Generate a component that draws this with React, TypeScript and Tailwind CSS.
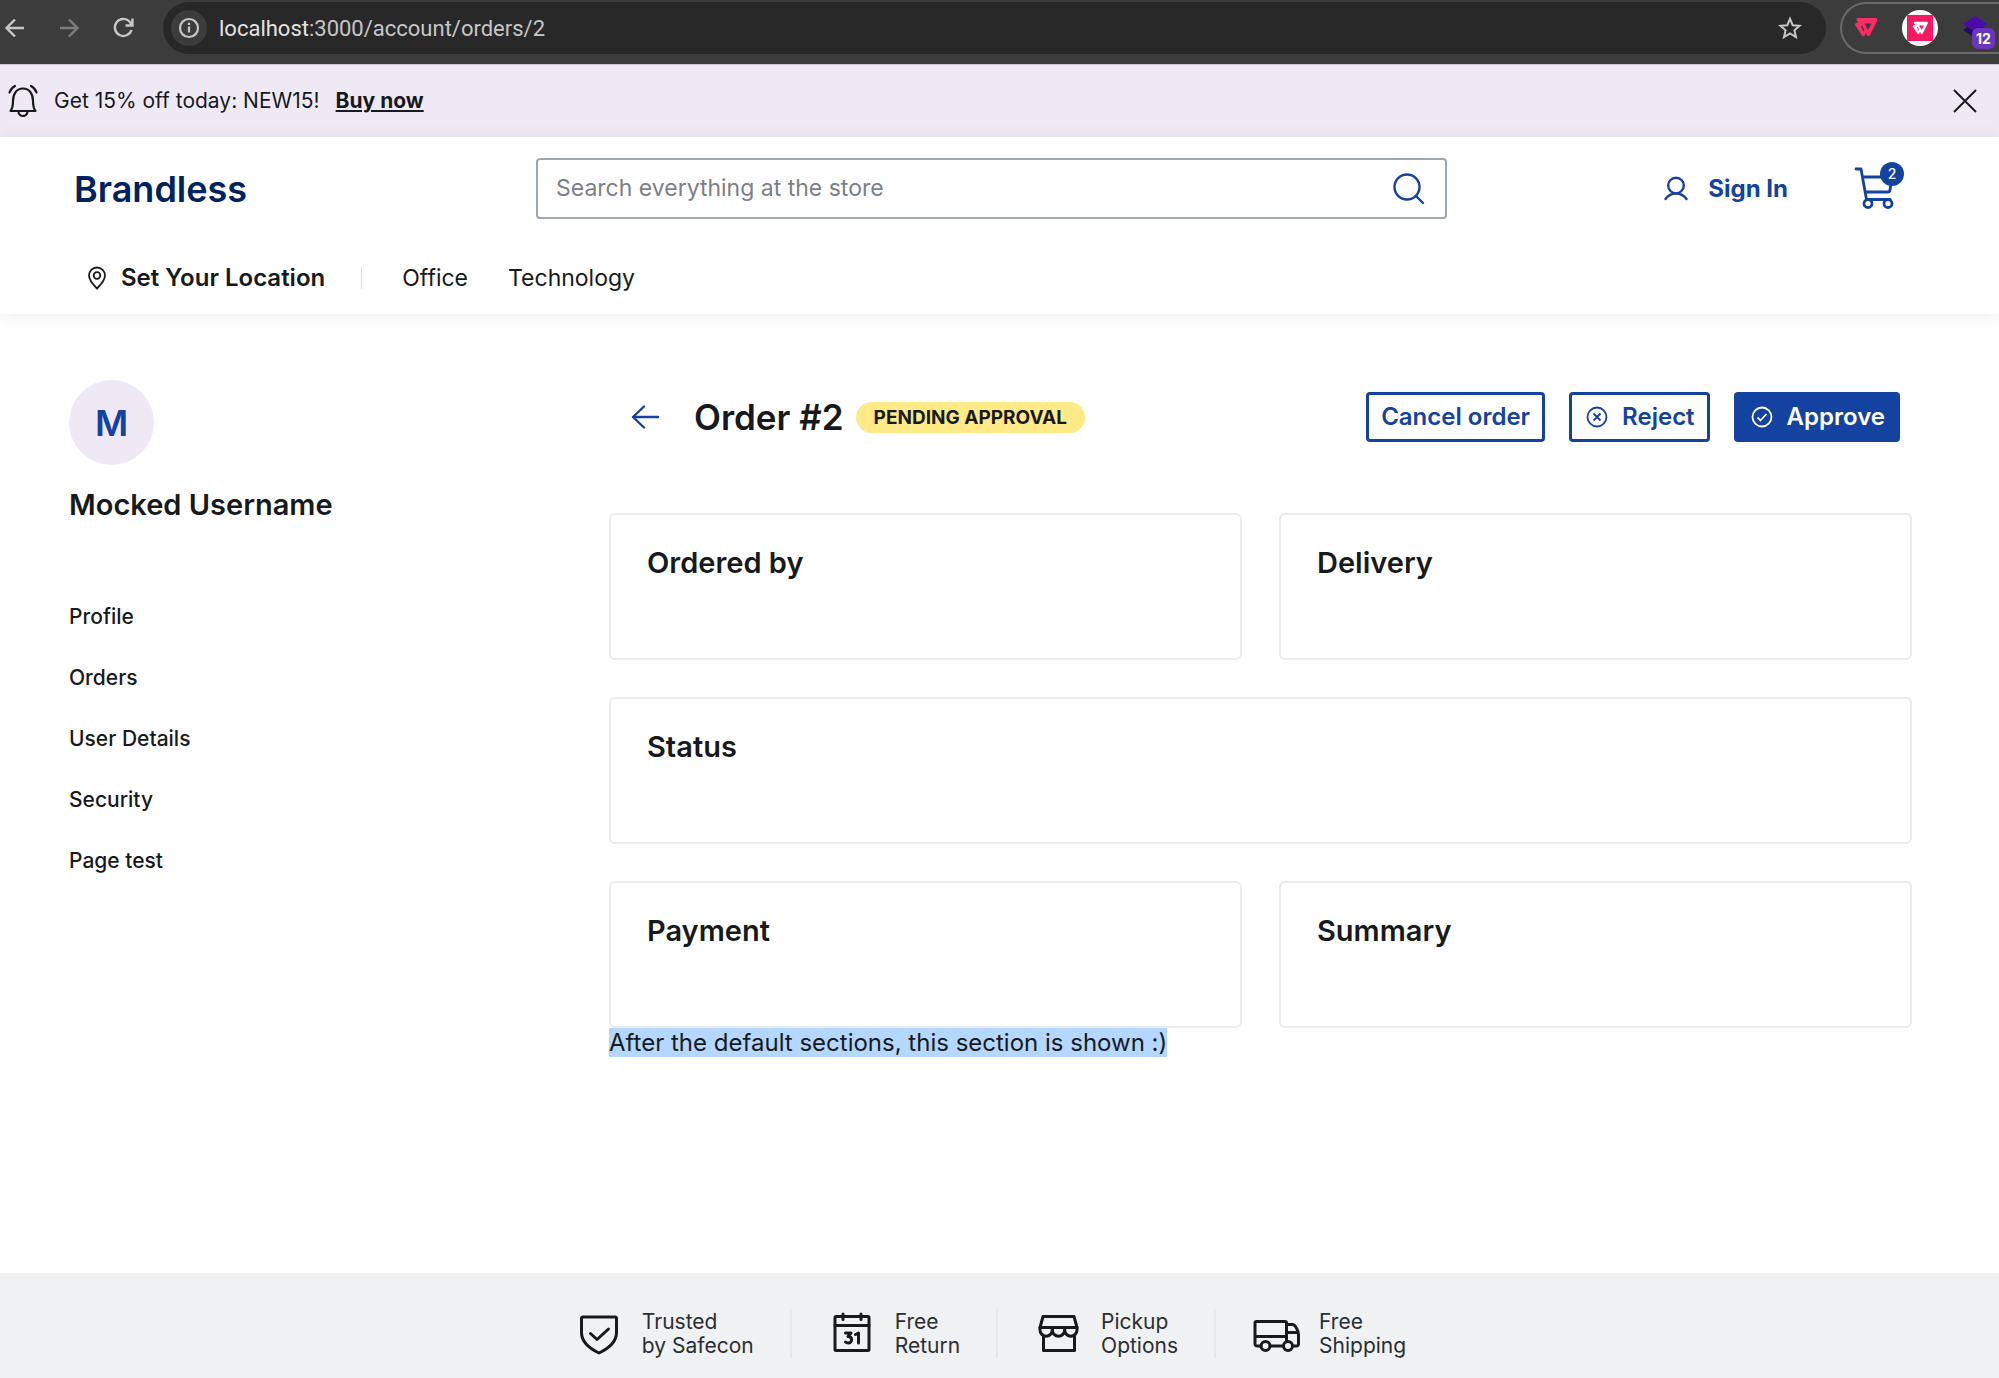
import type { ReactNode } from "react";

const menuItems = ["Profile", "Orders", "User Details", "Security", "Page test"];

const benefits = [
  { icon: <ShieldIcon />, lines: ["Trusted", "by Safecon"] },
  { icon: <CalendarIcon />, lines: ["Free", "Return"] },
  { icon: <StoreIcon />, lines: ["Pickup", "Options"] },
  { icon: <TruckIcon />, lines: ["Free", "Shipping"] },
];

function ShieldIcon() {
  return (
    <svg width="49" height="49" viewBox="0 0 49 49" fill="none" stroke="currentColor" strokeWidth="3" strokeLinejoin="round" strokeLinecap="round">
      <path d="M8 8h32c1 0 1.500.5 1.500 1.500v14c0 9-7 15.500-17.500 20.500-10.500-5-17.500-11.500-17.500-20.500v-14c0-1 .5-1.500 1.500-1.500z" />
      <path d="M15.500 24.500l6.500 6 11.500-10.500" />
    </svg>
  );
}

function CalendarIcon() {
  return (
    <svg width="49" height="49" viewBox="0 0 49 49" fill="none" stroke="currentColor" strokeWidth="3" strokeLinejoin="round" strokeLinecap="round">
      <rect x="7" y="7.500" width="34" height="34" rx="1" />
      <path d="M7 16.500h34M15 5v5.500M33 5v5.500" />
      <path d="M17.500 24H23l-3 3.500c5 0 4.500 6.500 .5 6.500-1.500 0-2.500-.5-3-1M27.500 25.500l3-1.500v10" />
    </svg>
  );
}

function StoreIcon() {
  return (
    <svg width="49" height="49" viewBox="0 0 49 49" fill="none" stroke="currentColor" strokeWidth="3" strokeLinejoin="round" strokeLinecap="round">
      <path d="M9 7.500h31l3 11v2.500a6 6 0 0 1-12.300 0 6 6 0 0 1-12.400 0 6 6 0 0 1-12.300 0v-2.500z" />
      <path d="M6 18.500h37M18.300 18.500v2.500M30.700 18.500v2.500M9.500 27.500v14h31v-14" />
    </svg>
  );
}

function TruckIcon() {
  return (
    <svg width="49" height="49" viewBox="0 0 49 49" fill="none" stroke="currentColor" strokeWidth="3" strokeLinejoin="round" strokeLinecap="round">
      <path d="M9 37H5c-1 0-2-1-2-2V14c0-1 .5-1.500 1.500-1.500H33c1 0 1.500.5 1.500 1.500v18M18 37h13M3 27.500h31.500" />
      <path d="M34.500 15.500h6c3 0 6 7 6 10V35c0 1-1 2-2 2h-3M34.500 23.500H46" />
      <circle cx="13.500" cy="37" r="4.500" />
      <circle cx="36" cy="37" r="4.500" />
    </svg>
  );
}

function BellIcon() {
  return (
    <svg width="32" height="34" viewBox="0 0 32 34" fill="none" stroke="currentColor" strokeWidth="2.200" strokeLinejoin="round" strokeLinecap="round">
      <path d="M3.500 27h25c-2-2.500-2.500-5-2.500-10 0-7-3.500-12.500-10-12.500S6 10 6 17c0 5-.5 7.500-2.500 10z" />
      <path d="M11.500 27.500a4.500 4.500 0 0 0 9 0M8 2C5 3.500 3.500 5.500 2.500 8.500M24 2c3 1.500 4.500 3.500 5.500 6.500" />
    </svg>
  );
}

function BrowserBar() {
  return (
    <div className="flex h-16 items-center bg-[#3c3c3c] pb-2 text-[#c7c7c7]">
      <div className="flex w-[163px] shrink-0 items-center gap-8 pl-1">
        <button type="button" aria-label="Back">
          <svg width="22" height="22" viewBox="0 0 22 22" fill="none" stroke="currentColor" strokeWidth="2.400">
            <path d="M20 11H3M11 2.500L2.500 11l8.500 8.500" />
          </svg>
        </button>
        <button type="button" aria-label="Forward" className="text-[#7d7d7d]">
          <svg width="22" height="22" viewBox="0 0 22 22" fill="none" stroke="currentColor" strokeWidth="2.400">
            <path d="M2 11h17M11 2.500l8.500 8.500-8.500 8.500" />
          </svg>
        </button>
        <button type="button" aria-label="Reload">
          <svg width="22" height="22" viewBox="0 0 22 22" fill="none" stroke="currentColor" strokeWidth="2.400">
            <path d="M19.500 13a8.500 8.500 0 1 1-2-8.500L20 8M20.500 1.500V8.500h-7" />
          </svg>
        </button>
      </div>
      <div className="flex h-[52px] flex-1 items-center rounded-full bg-[#282828] pr-6 pl-2">
        <span className="flex size-9 items-center justify-center rounded-full bg-[#3c3c3c]">
          <svg width="22" height="22" viewBox="0 0 22 22" fill="none" stroke="currentColor" strokeWidth="2.200">
            <circle cx="11" cy="11" r="9" />
            <path d="M11 9.500v6M11 5.800v2.200" />
          </svg>
        </span>
        <span className="ml-3 flex-1 font-[Roboto,sans-serif] text-[22px] text-[#c7c7c7]">
          <span className="text-[#e3e3e3]">localhost</span>:3000/account/orders/2
        </span>
        <button type="button" aria-label="Bookmark this page">
          <svg width="24" height="24" viewBox="0 0 24 24" fill="none" stroke="currentColor" strokeWidth="2">
            <path d="M12 2.800l2.700 6.400 6.900.6-5.200 4.500 1.600 6.800-6-3.600-6 3.600 1.600-6.800-5.200-4.500 6.900-.6z" />
          </svg>
        </button>
      </div>
      <div className="ml-[14px] flex h-[52px] w-[159px] shrink-0 items-center rounded-l-full border-2 border-r-0 border-[#6b6b6b] pl-3">
        <svg width="24" height="22" viewBox="0 0 24 22" fill="#ff2c63">
          <VtexMark />
        </svg>
        <span className="ml-6 flex size-9 items-center justify-center rounded-full bg-white">
          <svg width="26" height="26" viewBox="0 0 26 26">
            <rect width="26" height="26" fill="#f71963" />
            <g transform="translate(5 6) scale(.68)" fill="#fff">
              <VtexMark />
            </g>
          </svg>
        </span>
        <span className="relative ml-6 h-9 w-9">
          <svg width="34" height="34" viewBox="0 0 34 34">
            <path d="M1 20l12-8 12 8-12 8z" fill="#1f0a70" />
            <path d="M1 14L13 6l12 8-12 8z" fill="#4a0ab0" />
          </svg>
          <span className="absolute top-[18px] left-[10px] rounded-md bg-[#6b35bd] px-1 text-[14px] leading-[21px] font-bold text-white">
            12
          </span>
        </span>
      </div>
    </div>
  );
}

function VtexMark() {
  return (
    <path
      fillRule="evenodd"
      d="M4 1h17.500c2 0 2.300 1.500 1.500 3L16 18c-.8 1.500-2.500 1.500-3.200 0l-1-2-1.200 2.500c-.6 1.200-2 1.200-2.600 0L1.300 8.500C.6 7 1.500 5.800 3 5.800h1.500L3 3.800C2 2.500 2.500 1 4 1zM10.500 6.500l3.500 6.500 3.500-6.500zM6.800 9l2.700 5.500.8-1.700L8.300 9z"
    />
  );
}

function PromoBanner() {
  return (
    <div className="flex h-[73px] items-center border-t border-[#c9c7cd] bg-[#efe9f6] pr-[22px] pl-[7px] text-[21px]">
      <BellIcon />
      <p className="ml-[15px]">Get 15% off today: NEW15!</p>
      <a href="#" className="ml-4 font-bold underline">
        Buy now
      </a>
      <button type="button" aria-label="Close" className="ml-auto">
        <svg width="24" height="24" viewBox="0 0 24 24" fill="none" stroke="currentColor" strokeWidth="2">
          <path d="M1 1l22 22M23 1L1 23" />
        </svg>
      </button>
    </div>
  );
}

function StoreHeader() {
  return (
    <header className="bg-white pt-[21px] pb-5 shadow-[0_2px_16px_rgba(0,0,0,0.08)]">
      <div className="flex items-center pr-[95px] pl-[74px]">
        <a href="#" className="w-[462px] shrink-0 text-[36px] leading-10 font-semibold text-[#00225f]">
          Brandless
        </a>
        <label className="flex h-[61px] flex-1 items-center rounded-sm border-2 border-[#9ea6b3] pr-5 pl-[18px]">
          <input
            type="search"
            aria-label="Search"
            placeholder="Search everything at the store"
            className="flex-1 text-[23px] outline-none placeholder:text-[#7c7f85]"
          />
          <button type="button" aria-label="Submit search" className="text-[#1442a0]">
            <svg width="32" height="32" viewBox="0 0 32 32" fill="none" stroke="currentColor" strokeWidth="2.400" strokeLinecap="round">
              <circle cx="14" cy="14" r="12.500" />
              <path d="M23 23l7 7" />
            </svg>
          </button>
        </label>
        <a href="#" className="ml-[216px] flex items-center text-2xl font-bold text-[#1442a0]">
          <svg width="26" height="26" viewBox="0 0 26 26" fill="none" stroke="currentColor" strokeWidth="2.400" strokeLinecap="round">
            <circle cx="13" cy="9.500" r="7.800" />
            <path d="M2.500 23C5 19.500 8.500 17.500 13 17.500s8 2 10.500 5.500" />
          </svg>
          <span className="ml-[19px]">Sign In</span>
        </a>
        <a href="#" aria-label="Cart, 2 items" className="relative ml-[66px] h-[50px] w-[50px] text-[#1442a0]">
          <svg width="50" height="50" viewBox="0 0 50 50" fill="none" stroke="currentColor" strokeWidth="2.800" strokeLinecap="round" strokeLinejoin="round">
            <path d="M2 5h5l5.500 30.500H36M8.500 13H38l-2 13c-.2 1.200-1 2-2.200 2H11.500" />
            <circle cx="14" cy="39.500" r="4" fill="#fff" />
            <circle cx="34" cy="39.500" r="4" fill="#fff" />
          </svg>
          <span className="absolute -top-0.5 right-0 size-6 rounded-full bg-[#1442a0] text-center text-sm leading-6 font-medium text-white">
            2
          </span>
        </a>
      </div>
      <nav className="mt-[43px] flex items-center pl-[87px] text-[23px] leading-8">
        <button type="button" className="flex items-center text-2xl font-semibold">
          <svg width="20" height="24" viewBox="0 0 20 24" fill="none" stroke="currentColor" strokeWidth="1.800">
            <path d="M10 22.500C6 18.500 2 14 2 9.500a8 8 0 0 1 16 0c0 4.500-4 9-8 13z" />
            <circle cx="10" cy="9.500" r="3.300" />
          </svg>
          <span className="ml-[14px]">Set Your Location</span>
        </button>
        <span className="ml-9 h-[22px] w-px bg-[#dcdee2]" />
        <a href="#" className="ml-10">
          Office
        </a>
        <a href="#" className="ml-10">
          Technology
        </a>
      </nav>
    </header>
  );
}

function Sidebar() {
  return (
    <aside className="w-[540px] shrink-0">
      <div className="flex size-[85px] items-center justify-center rounded-full bg-[#efe9f6] text-[36px] font-semibold text-[#1442a0]">
        M
      </div>
      <h2 className="mt-6 text-[29px] leading-8 font-semibold">Mocked Username</h2>
      <ul className="mt-[82px] flex flex-col gap-[33px] text-[21px] leading-7 font-medium">
        {menuItems.map((item) => (
          <li key={item}>
            <a href="#">{item}</a>
          </li>
        ))}
      </ul>
    </aside>
  );
}

function Card({ title, wide = false }: { title: string; wide?: boolean }) {
  return (
    <section className={`h-[147px] rounded-md border-2 border-[#ececee] px-9 pt-8 ${wide ? "col-span-2" : ""}`}>
      <h3 className="text-[29px] leading-8 font-semibold">{title}</h3>
    </section>
  );
}

function OutlineButton({ children }: { children: ReactNode }) {
  return (
    <button type="button" className="flex h-[50px] items-center rounded-sm border-[3px] border-[#1442a0] px-3 text-2xl font-semibold text-[#1442a0]">
      {children}
    </button>
  );
}

function OrderHeader() {
  return (
    <div className="flex h-[50px] items-center pr-3 pl-[22px]">
      <a href="#" aria-label="Back to orders" className="text-[#1442a0]">
        <svg width="29" height="24" viewBox="0 0 29 24" fill="none" stroke="currentColor" strokeWidth="2.400" strokeLinecap="round" strokeLinejoin="round">
          <path d="M27 12H2M13 1.500L2 12l11 10.500" />
        </svg>
      </a>
      <h1 className="ml-[34px] text-[35px] leading-10 font-semibold">Order #2</h1>
      <span className="ml-3 rounded-full bg-[#ffea87] px-[18px] text-[19px] leading-[31px] font-bold">PENDING APPROVAL</span>
      <div className="ml-auto flex gap-6">
        <OutlineButton>Cancel order</OutlineButton>
        <OutlineButton>
          <svg width="22" height="22" viewBox="0 0 22 22" fill="none" stroke="currentColor" strokeWidth="1.800" className="mr-[14px] ml-0.5">
            <circle cx="11" cy="11" r="9.500" />
            <path d="M7.500 7.500l7 7M14.500 7.500l-7 7" />
          </svg>
          Reject
        </OutlineButton>
        <button type="button" className="flex h-[50px] items-center rounded-sm bg-[#1442a0] pr-[15px] pl-[17px] text-2xl font-semibold text-white">
          <svg width="22" height="22" viewBox="0 0 22 22" fill="none" stroke="currentColor" strokeWidth="1.800" className="mr-[14px]">
            <circle cx="11" cy="11" r="9.500" />
            <path d="M6.500 11.500l3 3 6-6.500" />
          </svg>
          Approve
        </button>
      </div>
    </div>
  );
}

export default function App() {
  return (
    <div className="flex min-h-screen flex-col bg-white font-[Inter,sans-serif] text-[#171a1c]">
      <BrowserBar />
      <PromoBanner />
      <StoreHeader />

      <main className="flex flex-1 pt-[66px] pr-[87px] pb-[210px] pl-[69px]">
        <Sidebar />
        <div className="flex-1 pt-3">
          <OrderHeader />
          <div className="mt-[71px] grid grid-cols-2 gap-[37px]">
            <Card title="Ordered by" />
            <Card title="Delivery" />
            <Card title="Status" wide />
            <Card title="Payment" />
            <Card title="Summary" />
          </div>
          <p className="text-2xl leading-[29px]">
            <span className="bg-[#b3d7fe]">After the default sections, this section is shown :)</span>
          </p>
        </div>
      </main>

      {/* Benefits */}
      <footer className="bg-[#f0f1f3] pt-9 pb-5">
        <ul className="flex justify-center pr-[18px] text-[21px] leading-6 text-[#2b2e31]">
          {benefits.map((benefit) => (
            <li
              key={benefit.lines[1]}
              className="flex items-center gap-[18px] border-l-2 border-[#e5e7ea] px-9 first:border-l-0 first:pl-0 last:pr-0"
            >
              <span className="text-[#171a1c]">{benefit.icon}</span>
              <span>
                {benefit.lines[0]}
                <br />
                {benefit.lines[1]}
              </span>
            </li>
          ))}
        </ul>
      </footer>
    </div>
  );
}
